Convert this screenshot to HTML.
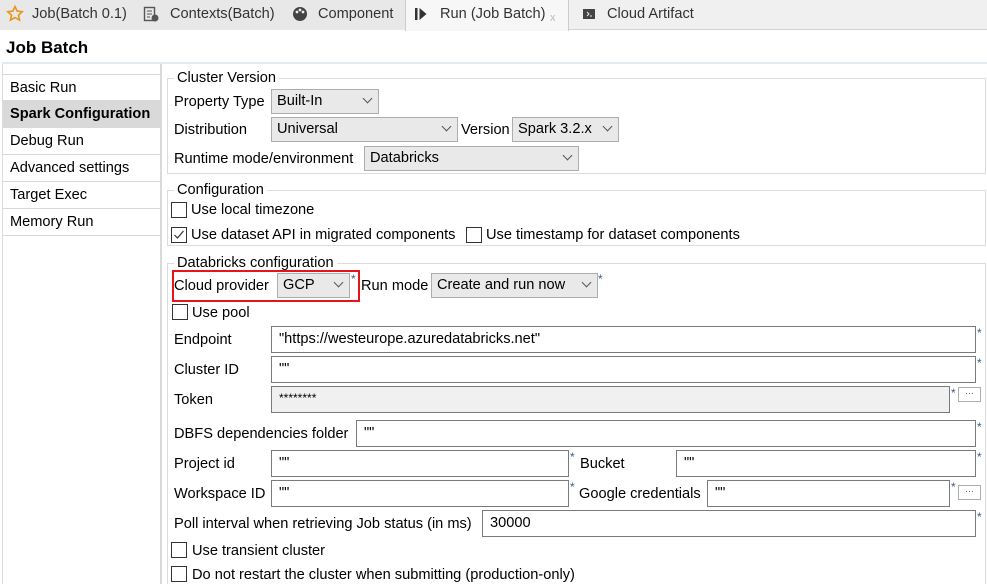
<!DOCTYPE html>
<html><head><meta charset="utf-8"><style>
*{box-sizing:border-box;margin:0;padding:0}
html,body{width:987px;height:584px;overflow:hidden}
body{background:#fff;position:relative;font-family:"Liberation Sans",sans-serif;font-size:14.6px;color:#000}
.a{position:absolute;white-space:nowrap}
.t{position:absolute;white-space:nowrap;line-height:16px;font-size:14.6px}
.sel{position:absolute;background:#e9e9e9;border:1px solid #adadad;line-height:22px;padding-left:5px;font-size:14.6px}
.sel i{position:absolute;right:7px;width:7px;height:7px;border-right:1.3px solid #555;border-bottom:1.3px solid #555;transform:rotate(45deg);top:5px}
.inp{position:absolute;border:1px solid #7a7a7a;background:#fff;line-height:24px;padding-left:7px;font-size:14.6px}
.cb{position:absolute;width:16px;height:16px;border:1px solid #333;background:#fff}
.grp{position:absolute;border:1px solid #dcdcdc}
.lg{position:absolute;background:#fff;padding:0 3px;line-height:16px}
.star{position:absolute;color:#3c5a8a;font-size:12px;line-height:12px}
.btn{position:absolute;width:23px;height:15px;border:1px solid #adadad;background:#fff;font-size:9px;line-height:10px;text-align:center;color:#555}
.nav{position:absolute;left:3px;width:157px;height:27px;border-bottom:1px solid #d8d8d8;padding-left:7px;line-height:26px}
</style></head><body>
<div class="a" style="left:0;top:0;width:987px;height:30px;background:#f0f0f0;border-bottom:1px solid #d4d4d4"></div>
<div class="a" style="left:0;top:0;width:405px;height:30px;background:#e8e8e8"></div>
<div class="a" style="left:405px;top:0;width:164px;height:31px;background:#f7f7f7;border-left:1px solid #ccc;border-right:1px solid #ccc"></div>
<svg class="a" style="left:6px;top:5px" width="18" height="18" viewBox="0 0 18 18"><path d="M9 1.5l2.2 4.6 5 .6-3.7 3.4 1 5-4.5-2.5-4.5 2.5 1-5L1.8 6.7l5-.6z" fill="none" stroke="#e8951c" stroke-width="1.6"/></svg>
<div class="t" style="left:32px;top:6px;color:#333">Job(Batch 0.1)</div>
<svg class="a" style="left:143px;top:5px" width="16" height="18" viewBox="0 0 16 18"><rect x="1.5" y="2.5" width="10" height="13" fill="none" stroke="#555" stroke-width="1.4"/><path d="M4 6h5M4 9h5M4 12h3" stroke="#555"/><circle cx="12" cy="13" r="3.5" fill="#555"/></svg>
<div class="t" style="left:170px;top:6px;color:#333">Contexts(Batch)</div>
<svg class="a" style="left:292px;top:6px" width="16" height="16" viewBox="0 0 16 16"><circle cx="8" cy="8" r="7" fill="#444"/><circle cx="5" cy="6" r="1.4" fill="#eee"/><circle cx="8" cy="4" r="1.4" fill="#eee"/><circle cx="11" cy="6" r="1.4" fill="#eee"/></svg>
<div class="t" style="left:318px;top:6px;color:#333">Component</div>
<svg class="a" style="left:414px;top:7px" width="14" height="14" viewBox="0 0 14 14"><rect x="1" y="1" width="2.5" height="12" fill="#333"/><path d="M5.5 1l7 6-7 6z" fill="#333"/></svg>
<div class="t" style="left:440px;top:6px;color:#333">Run (Job Batch)</div>
<div class="t" style="left:550px;top:10px;color:#bbb;font-size:11px">x</div>
<svg class="a" style="left:582px;top:7px" width="14" height="14" viewBox="0 0 14 14"><rect x="1" y="2" width="12" height="10" fill="#444"/><path d="M5 5l2 2-2 2M8 9h2" stroke="#eee" fill="none"/></svg>
<div class="t" style="left:607px;top:6px;color:#333">Cloud Artifact</div>
<div class="t" style="left:6px;top:39px;font-size:17px;font-weight:bold;line-height:18px">Job Batch</div>
<div class="a" style="left:2px;top:62px;width:985px;height:2px;background:#e2ebf3"></div>
<div class="a" style="left:2px;top:64px;width:1px;height:520px;background:#dcdcdc"></div>
<div class="a" style="left:160px;top:64px;width:2px;height:520px;background:#d9d9d9"></div>
<div class="nav" style="top:74px;border-top:1px solid #d8d8d8">Basic Run</div>
<div class="nav" style="top:101px;background:#d9d9d9;font-weight:bold">Spark Configuration</div>
<div class="nav" style="top:128px">Debug Run</div>
<div class="nav" style="top:155px">Advanced settings</div>
<div class="nav" style="top:182px">Target Exec</div>
<div class="nav" style="top:209px">Memory Run</div>
<div class="grp" style="left:167px;top:78px;width:819px;height:96px"></div>
<div class="lg" style="left:174px;top:70px">Cluster Version</div>
<div class="t" style="left:174px;top:94px">Property Type</div>
<div class="sel" style="left:271px;top:89px;width:108px;height:25px">Built-In<i></i></div>
<div class="t" style="left:174px;top:122px">Distribution</div>
<div class="sel" style="left:271px;top:117px;width:187px;height:25px">Universal<i></i></div>
<div class="t" style="left:461px;top:122px">Version</div>
<div class="sel" style="left:512px;top:117px;width:107px;height:25px">Spark 3.2.x<i></i></div>
<div class="t" style="left:174px;top:151px">Runtime mode/environment</div>
<div class="sel" style="left:364px;top:146px;width:215px;height:25px">Databricks<i></i></div>
<div class="grp" style="left:167px;top:190px;width:819px;height:56px"></div>
<div class="lg" style="left:174px;top:182px">Configuration</div>
<div class="cb" style="left:171px;top:202px"></div>
<div class="t" style="left:191px;top:202px">Use local timezone</div>
<div class="cb" style="left:171px;top:227px"></div>
<svg class="a" style="left:173px;top:229px" width="12" height="12" viewBox="0 0 12 12"><path d="M1.5 6l3 3 6-7" fill="none" stroke="#333" stroke-width="1.2"/></svg>
<div class="t" style="left:191px;top:227px">Use dataset API in migrated components</div>
<div class="cb" style="left:466px;top:227px"></div>
<div class="t" style="left:486px;top:227px">Use timestamp for dataset components</div>
<div class="grp" style="left:167px;top:263px;width:819px;height:330px"></div>
<div class="lg" style="left:174px;top:255px">Databricks configuration</div>
<div class="a" style="left:172px;top:270px;width:188px;height:32px;border:2px solid #e8141c"></div>
<div class="t" style="left:174px;top:278px">Cloud provider</div>
<div class="sel" style="left:277px;top:273px;width:73px;height:25px">GCP<i></i></div>
<div class="star" style="left:351px;top:273px">*</div>
<div class="t" style="left:361px;top:278px">Run mode</div>
<div class="sel" style="left:431px;top:273px;width:167px;height:25px">Create and run now<i></i></div>
<div class="star" style="left:598px;top:273px">*</div>
<div class="cb" style="left:172px;top:304px"></div>
<div class="t" style="left:192px;top:305px">Use pool</div>
<div class="t" style="left:174px;top:332px">Endpoint</div>
<div class="inp" style="left:271px;top:326px;width:705px;height:27px">"https://westeurope.azuredatabricks.net"</div>
<div class="star" style="left:977px;top:327px">*</div>
<div class="t" style="left:174px;top:362px">Cluster ID</div>
<div class="inp" style="left:271px;top:356px;width:705px;height:27px">""</div>
<div class="star" style="left:977px;top:357px">*</div>
<div class="t" style="left:174px;top:392px">Token</div>
<div class="inp" style="left:271px;top:386px;width:679px;height:27px;background:#f0f0f0;line-height:22px;font-size:12px">********</div>
<div class="star" style="left:951px;top:387px">*</div>
<div class="btn" style="left:958px;top:387px">···</div>
<div class="t" style="left:174px;top:426px">DBFS dependencies folder</div>
<div class="inp" style="left:356px;top:420px;width:620px;height:27px">""</div>
<div class="star" style="left:977px;top:421px">*</div>
<div class="t" style="left:174px;top:456px">Project id</div>
<div class="inp" style="left:271px;top:450px;width:298px;height:27px">""</div>
<div class="star" style="left:570px;top:451px">*</div>
<div class="t" style="left:580px;top:456px">Bucket</div>
<div class="inp" style="left:676px;top:450px;width:300px;height:27px">""</div>
<div class="star" style="left:977px;top:451px">*</div>
<div class="t" style="left:174px;top:486px">Workspace ID</div>
<div class="inp" style="left:271px;top:480px;width:298px;height:27px">""</div>
<div class="star" style="left:570px;top:481px">*</div>
<div class="t" style="left:579px;top:486px">Google credentials</div>
<div class="inp" style="left:707px;top:480px;width:243px;height:27px">""</div>
<div class="star" style="left:951px;top:481px">*</div>
<div class="btn" style="left:958px;top:485px">···</div>
<div class="t" style="left:174px;top:516px">Poll interval when retrieving Job status (in ms)</div>
<div class="inp" style="left:482px;top:510px;width:494px;height:27px">30000</div>
<div class="star" style="left:977px;top:511px">*</div>
<div class="cb" style="left:171px;top:542px"></div>
<div class="t" style="left:192px;top:543px">Use transient cluster</div>
<div class="cb" style="left:171px;top:566px"></div>
<div class="t" style="left:192px;top:567px">Do not restart the cluster when submitting (production-only)</div>
</body></html>
